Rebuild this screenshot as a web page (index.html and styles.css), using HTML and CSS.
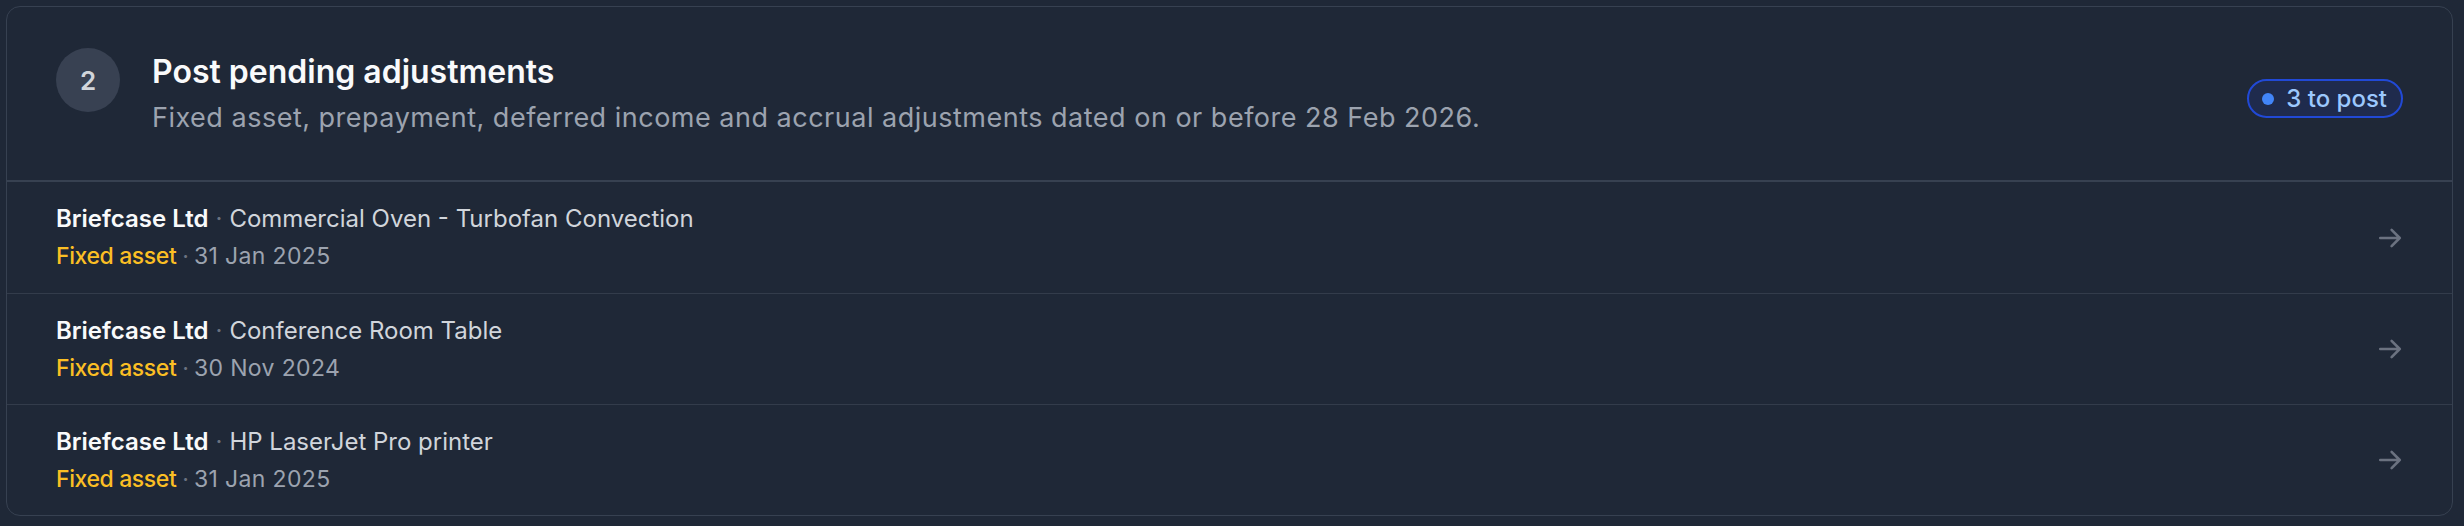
FILE: index.html
```html
<!DOCTYPE html>
<html lang="en">
<head>
<meta charset="utf-8">
<title>Post pending adjustments</title>
<link rel="stylesheet" href="styles.css">
</head>
<body>
<div class="page">
  <section class="card">
    <header class="card-head">
      <div class="step">2</div>
      <div class="head-text">
        <h2 class="title">Post pending adjustments</h2>
        <p class="subtitle">Fixed asset, prepayment, deferred income and accrual adjustments dated on or before 28 Feb 2026.</p>
      </div>
      <span class="badge"><span class="badge-dot"></span>3 to post</span>
    </header>
    <ul class="rows">
      <li class="row">
        <div class="row-text">
          <div class="line1"><span class="org">Briefcase Ltd</span><span class="sep">·</span><span class="item">Commercial Oven - Turbofan Convection</span></div>
          <div class="line2"><span class="kind">Fixed asset</span><span class="sep">·</span><span class="date">31 Jan 2025</span></div>
        </div>
        <svg class="arrow" viewBox="0 0 24 24" fill="none" stroke="currentColor" stroke-width="2.4" stroke-linecap="round" stroke-linejoin="round"><path d="M13.5 4.5 21 12l-7.5 7.5M21 12H3"/></svg>
      </li>
      <li class="row">
        <div class="row-text">
          <div class="line1"><span class="org">Briefcase Ltd</span><span class="sep">·</span><span class="item">Conference Room Table</span></div>
          <div class="line2"><span class="kind">Fixed asset</span><span class="sep">·</span><span class="date">30 Nov 2024</span></div>
        </div>
        <svg class="arrow" viewBox="0 0 24 24" fill="none" stroke="currentColor" stroke-width="2.4" stroke-linecap="round" stroke-linejoin="round"><path d="M13.5 4.5 21 12l-7.5 7.5M21 12H3"/></svg>
      </li>
      <li class="row">
        <div class="row-text">
          <div class="line1"><span class="org">Briefcase Ltd</span><span class="sep">·</span><span class="item">HP LaserJet Pro printer</span></div>
          <div class="line2"><span class="kind">Fixed asset</span><span class="sep">·</span><span class="date">31 Jan 2025</span></div>
        </div>
        <svg class="arrow" viewBox="0 0 24 24" fill="none" stroke="currentColor" stroke-width="2.4" stroke-linecap="round" stroke-linejoin="round"><path d="M13.5 4.5 21 12l-7.5 7.5M21 12H3"/></svg>
      </li>
    </ul>
  </section>
</div>
</body>
</html>
```
FILE: styles.css
```css
* { box-sizing: border-box; }
html, body {
  margin: 0;
  background: #1f2837;
}
body {
  font-family: Inter, "Noto Sans", "Liberation Sans", sans-serif;
  color: #f3f4f6;
}
.page {
  padding: 6px 11px 10px 6px;
}
.card {
  border: 1px solid #374151;
  border-radius: 14px;
  background: #1f2837;
}
.card-head {
  display: flex;
  align-items: flex-start;
  gap: 32px;
  padding: 41px 49px 44px 49px;
  border-bottom: 2px solid #374151;
  height: 175px;
}
.step {
  flex: none;
  width: 64px;
  height: 64px;
  border-radius: 50%;
  background: #384152;
  color: #d1d5db;
  font-weight: 600;
  font-size: 26px;
  display: flex;
  align-items: center;
  justify-content: center;
}
.head-text {
  flex: 1;
  padding-top: 4px;
}
.title {
  margin: 0;
  font-size: 32px;
  line-height: 40px;
  font-weight: 600;
  color: #f9fafb;
}
.subtitle {
  margin: 8px 0 0;
  font-size: 27px;
  letter-spacing: 0.5px;
  line-height: 36px;
  color: #9ca3af;
}
.badge {
  flex: none;
  margin-top: 31px;
  display: flex;
  align-items: center;
  gap: 12px;
  height: 39px;
  padding: 0 14px 0 13px;
  border: 2px solid #2149d6;
  border-radius: 999px;
  background: #1f2b4d;
  color: #9cc8fd;
  font-size: 24px;
  font-weight: 500;
}
.badge-dot {
  width: 12px;
  height: 12px;
  border-radius: 50%;
  background: #4285f8;
}
.rows {
  list-style: none;
  margin: 0;
  padding: 0;
}
.row {
  display: flex;
  align-items: center;
  justify-content: space-between;
  height: 111px;
  padding: 0 49px;
  border-top: 1px solid #333c4b;
}
.row:first-child { border-top: none; }
.row-text {
  display: flex;
  flex-direction: column;
  gap: 5px;
}
.line1, .line2 {
  line-height: 32px;
  white-space: nowrap;
}
.line1 { font-size: 24px; }
.line2 { font-size: 23px; }
.org {
  font-weight: 600;
  color: #f9fafb;
}
.item { color: #d1d5db; }
.sep {
  color: #6b7280;
  margin: 0 7px;
}
.line2 .sep { margin: 0 5px 0 6px; }
.kind {
  color: #fbbf24;
  font-weight: 500;
  letter-spacing: -0.4px;
}
.date {
  color: #9ca3af;
  letter-spacing: 0.35px;
}
.arrow {
  flex: none;
  width: 26px;
  height: 26px;
  color: #6b7280;
}
```
